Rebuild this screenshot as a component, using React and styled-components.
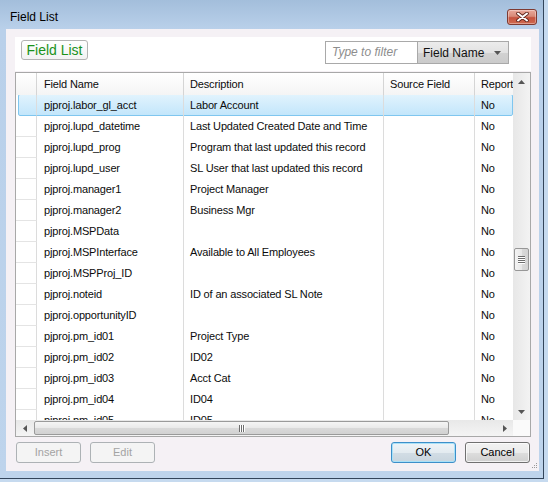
import React from 'react'
import styled, { createGlobalStyle, css } from 'styled-components'

const GlobalStyle = createGlobalStyle`
    html, body {
        margin: 0;
        padding: 0;
        background: #c6daef;
    }
    body {
        font-family: 'Liberation Sans', Arial, sans-serif;
        font-size: 11px;
        color: #0c0c0c;
    }
`;

const Window = styled.div`
    width: 543px;
    height: 478px;
    border-right: 1px solid #33455b;
    border-bottom: 1px solid #33455b;
    background: linear-gradient(#a3bedb 0, #b9d0ea 29px, #bed4ec 100%);
    display: flex;
    flex-direction: column;
`;
const TitleBar = styled.div`
    height: 29px;
    display: flex;
    align-items: flex-start;
    padding-left: 10px;
    flex: none;
`;
const Title = styled.div`
    margin-top: 10px;
    font-size: 12px;
    line-height: 14px;
    color: #000;
`;
const CloseButton = styled.div`
    margin: 9px 6px 0 auto;
    width: 30px;
    height: 16px;
    box-sizing: border-box;
    border: 1px solid #7e3a31;
    border-radius: 3px;
    background: linear-gradient(#e9a99b 0%, #d88a78 45%, #c5533f 55%, #cf6a4f 100%);
    box-shadow: inset 0 0 0 1px rgba(255,255,255,0.35);
    display: flex;
    align-items: center;
    justify-content: center;
`;
const Client = styled.div`
    position: relative;
    margin-left: 6px;
    width: 533px;
    height: 442px;
    box-sizing: border-box;
    padding: 8px 8px 0 9px;
    background: #f5f1f5;
    display: flex;
    flex-direction: column;
`;
const Toolbar = styled.div`
    height: 34px;
    background: #fff;
    display: flex;
    align-items: flex-start;
    flex: none;
`;
const TabLabel = styled.div`
    margin: 3px 0 0 6px;
    width: 67px;
    height: 20px;
    box-sizing: border-box;
    border: 1px solid #b3b3b3;
    border-radius: 3px;
    background: linear-gradient(#ffffff, #f2f2f2);
    color: #1a921a;
    font-size: 14px;
    line-height: 18px;
    text-align: center;
`;
const Filter = styled.div`
    margin: 4px 22px 0 auto;
    width: 184px;
    height: 23px;
    box-sizing: border-box;
    border: 1px solid #a9a9a9;
    display: flex;
`;
const FilterInput = styled.div`
    width: 92px;
    box-sizing: border-box;
    border-right: 1px solid #a9a9a9;
    padding-left: 6px;
    font-size: 12px;
    font-style: italic;
    line-height: 21px;
    color: #8d8d8d;
    background: #fff;
`;
const FilterSelect = styled.div`
    flex: 1;
    display: flex;
    align-items: center;
    padding: 0 7px 0 5px;
    font-size: 12px;
    color: #111;
    background: linear-gradient(#ececec 0%, #e2e2e2 50%, #d2d2d2 51%, #cbcbcb 100%);
    span { flex: 1; }
`;
const Grid = styled.div`
    margin-top: 1px;
    height: 365px;
    box-sizing: border-box;
    border: 1px solid #a8a8a8;
    background: #fff;
    display: flex;
    flex-direction: column;
    flex: none;
`;
const GridTop = styled.div`
    flex: 1;
    min-height: 0;
    display: flex;
`;
const GridMain = styled.div`
    flex: 1;
    overflow: hidden;
    display: flex;
    flex-direction: column;
`;
const HeaderRow = styled.div`
    height: 22px;
    flex: none;
    display: flex;
    background: linear-gradient(#ffffff, #f4f4f4);
`;
const Body = styled.div`
    flex: 1;
    overflow: hidden;
`;
const Row = styled.div`
    position: relative;
    height: 21px;
    display: flex;
    ${({ $selected }) => $selected && css`
        &::before {
            content: "";
            position: absolute;
            left: 2px;
            right: 0;
            top: -1px;
            bottom: 0;
            border: 1px solid #7fc6ef;
            border-radius: 2px;
            background: linear-gradient(#e1f3fd, #c3e6fb);
        }
    `}
`;
const Cell = styled.div`
    position: relative;
    z-index: 1;
    flex: none;
    width: ${({ $w }) => $w}px;
    box-sizing: border-box;
    padding-left: ${({ $pad }) => ($pad == null ? 7 : $pad)}px;
    border-right: ${({ $last }) => ($last ? 'none' : '1px solid #dcdcdc')};
    line-height: 21px;
    letter-spacing: -0.15px;
    white-space: nowrap;
    overflow: hidden;
`;
const HeadCell = styled(Cell)`
    line-height: 22px;
    border-right-color: #d5d5d5;
`;
const SelectorCell = styled(Cell)`
    border-bottom: 1px solid #e4e4e4;
    ${({ $selected }) => $selected && css`border-bottom-color: transparent;`}
`;
const VScroll = styled.div`
    width: 17px;
    flex: none;
    display: flex;
    flex-direction: column;
    background: linear-gradient(to right, #e7e7e7, #f3f3f3);
`;
const ArrowBox = styled.div`
    flex: none;
    width: ${({ $w }) => $w || 17}px;
    height: ${({ $h }) => $h || 17}px;
    display: flex;
    align-items: center;
    justify-content: center;
`;
const VTrack = styled.div`
    flex: 1;
    display: flex;
    flex-direction: column;
    align-items: center;
    padding-top: 158px;
`;
const VThumb = styled.div`
    width: 15px;
    height: 23px;
    box-sizing: border-box;
    border: 1px solid #979797;
    border-radius: 2px;
    background: linear-gradient(to right, #f4f4f4 0%, #e8e8e8 50%, #d9d9d9 51%, #d3d3d3 100%);
    display: flex;
    flex-direction: column;
    align-items: center;
    justify-content: center;
    gap: 1px;
    i {
        display: block;
        width: 7px;
        height: 1px;
        background: #6d6d6d;
        box-shadow: 0 1px 0 #fff;
    }
`;
const HScrollRow = styled.div`
    height: 16px;
    flex: none;
    display: flex;
`;
const HScroll = styled.div`
    flex: 1;
    display: flex;
    align-items: center;
    background: linear-gradient(#e8e8e8, #f4f4f4);
`;
const HThumb = styled.div`
    margin-left: 1px;
    width: 415px;
    height: 14px;
    box-sizing: border-box;
    border: 1px solid #9a9a9a;
    border-radius: 2px;
    background: linear-gradient(#f5f5f5 0%, #e9e9e9 50%, #d9d9d9 51%, #d2d2d2 100%);
    display: flex;
    align-items: center;
    justify-content: center;
    gap: 1px;
    i {
        display: block;
        width: 1px;
        height: 7px;
        background: #6d6d6d;
        box-shadow: 1px 0 0 #fff;
    }
`;
const HSpacer = styled.div`
    flex: 1;
`;
const Corner = styled.div`
    width: 17px;
    flex: none;
    background: #fafafa;
`;
const Footer = styled.div`
    margin-top: 5px;
    height: 21px;
    padding: 0 1px;
    display: flex;
    gap: 9px;
    flex: none;
`;
const Button = styled.div`
    width: 65px;
    height: 21px;
    box-sizing: border-box;
    border: 1px solid #707070;
    border-radius: 3px;
    background: linear-gradient(#f2f2f2 0%, #ebebeb 50%, #dddddd 51%, #cfcfcf 100%);
    box-shadow: inset 0 0 0 1px rgba(255,255,255,0.7);
    text-align: center;
    line-height: 19px;
    font-size: 11px;
    color: #000;
    ${({ $disabled }) => $disabled && css`
        border-color: #adb2b5;
        background: #f4f4f4;
        box-shadow: none;
        color: #a3a3a3;
    `}
    ${({ $default }) => $default && css`
        border-color: #3c8fc9;
        box-shadow: inset 0 0 0 1px #a9e1f8;
        background: linear-gradient(#eef4f8 0%, #e3ebf0 50%, #d2dde5 51%, #c8d5de 100%);
    `}
    ${({ $push }) => $push && css`margin-left: auto;`}
`;
const Grip = styled.svg`
    position: absolute;
    right: 1px;
    bottom: 2px;
`;

const Tri = ({ dir }) => {
    const pts = {
        up: '0,4 3.5,0 7,4',
        down: '0,0 7,0 3.5,4',
        left: '4,0 4,7 0,3.5',
        right: '0,0 4,3.5 0,7',
    }[dir];
    const horiz = dir === 'left' || dir === 'right';
    return (
        <svg width={horiz ? 4 : 7} height={horiz ? 7 : 4} viewBox={horiz ? '0 0 4 7' : '0 0 7 4'}>
            <polygon points={pts} fill="#555" />
        </svg>
    );
};

const columns = [
    { key: 'name', label: 'Field Name', w: 147 },
    { key: 'desc', label: 'Description', w: 200, pad: 6 },
    { key: 'src', label: 'Source Field', w: 91, pad: 6 },
    { key: 'rep', label: 'Report', w: 70, pad: 6, last: true },
];

const rows = [
    ['pjproj.labor_gl_acct', 'Labor Account'],
    ['pjproj.lupd_datetime', 'Last Updated Created Date and Time'],
    ['pjproj.lupd_prog', 'Program that last updated this record'],
    ['pjproj.lupd_user', 'SL User that last updated this record'],
    ['pjproj.manager1', 'Project Manager'],
    ['pjproj.manager2', 'Business Mgr'],
    ['pjproj.MSPData', ''],
    ['pjproj.MSPInterface', 'Available to All Employees'],
    ['pjproj.MSPProj_ID', ''],
    ['pjproj.noteid', 'ID of an associated SL Note'],
    ['pjproj.opportunityID', ''],
    ['pjproj.pm_id01', 'Project Type'],
    ['pjproj.pm_id02', 'ID02'],
    ['pjproj.pm_id03', 'Acct Cat'],
    ['pjproj.pm_id04', 'ID04'],
    ['pjproj.pm_id05', 'ID05'],
];

export default function App() {
    return (
        <>
            <GlobalStyle />
            <Window>
                <TitleBar>
                    <Title>Field List</Title>
                    <CloseButton>
                        <svg width="13" height="10" viewBox="0 0 13 10">
                            <path d="M2 1.5 L11 8.5 M11 1.5 L2 8.5" stroke="#5b2219" strokeWidth="3.6" strokeLinecap="round" />
                            <path d="M2 1.5 L11 8.5 M11 1.5 L2 8.5" stroke="#fff" strokeWidth="2" strokeLinecap="round" />
                        </svg>
                    </CloseButton>
                </TitleBar>
                <Client>
                    <Toolbar>
                        <TabLabel>Field List</TabLabel>
                        <Filter>
                            <FilterInput>Type to filter</FilterInput>
                            <FilterSelect>
                                <span>Field Name</span>
                                <Tri dir="down" />
                            </FilterSelect>
                        </Filter>
                    </Toolbar>
                    <Grid>
                        <GridTop>
                            <GridMain>
                                <HeaderRow>
                                    <HeadCell $w={21} />
                                    {columns.map(c => (
                                        <HeadCell key={c.key} $w={c.w} $pad={c.pad} $last={c.last}>{c.label}</HeadCell>
                                    ))}
                                </HeaderRow>
                                <Body>
                                    {rows.map(([name, desc], i) => (
                                        <Row key={name} $selected={i === 0}>
                                            <SelectorCell $w={21} $selected={i === 0} />
                                            <Cell $w={147}>{name}</Cell>
                                            <Cell $w={200} $pad={6}>{desc}</Cell>
                                            <Cell $w={91} $pad={6} />
                                            <Cell $w={70} $pad={6} $last>No</Cell>
                                        </Row>
                                    ))}
                                </Body>
                            </GridMain>
                            <VScroll>
                                <ArrowBox><Tri dir="up" /></ArrowBox>
                                <VTrack>
                                    <VThumb><i /><i /><i /><i /></VThumb>
                                </VTrack>
                                <ArrowBox><Tri dir="down" /></ArrowBox>
                            </VScroll>
                        </GridTop>
                        <HScrollRow>
                            <HScroll>
                                <ArrowBox $h={16}><Tri dir="left" /></ArrowBox>
                                <HThumb><i /><i /><i /></HThumb>
                                <HSpacer />
                                <ArrowBox $h={16}><Tri dir="right" /></ArrowBox>
                            </HScroll>
                            <Corner />
                        </HScrollRow>
                    </Grid>
                    <Footer>
                        <Button $disabled>Insert</Button>
                        <Button $disabled>Edit</Button>
                        <Button $default $push>OK</Button>
                        <Button>Cancel</Button>
                    </Footer>
                    <Grip width="6" height="6" viewBox="0 0 6 6">
                        <rect x="4" y="0" width="1" height="1" fill="#9a9a9a" />
                        <rect x="2" y="2" width="1" height="1" fill="#9a9a9a" />
                        <rect x="4" y="2" width="1" height="1" fill="#9a9a9a" />
                        <rect x="0" y="4" width="1" height="1" fill="#9a9a9a" />
                        <rect x="2" y="4" width="1" height="1" fill="#9a9a9a" />
                        <rect x="4" y="4" width="1" height="1" fill="#9a9a9a" />
                    </Grip>
                </Client>
            </Window>
        </>
    )
}
